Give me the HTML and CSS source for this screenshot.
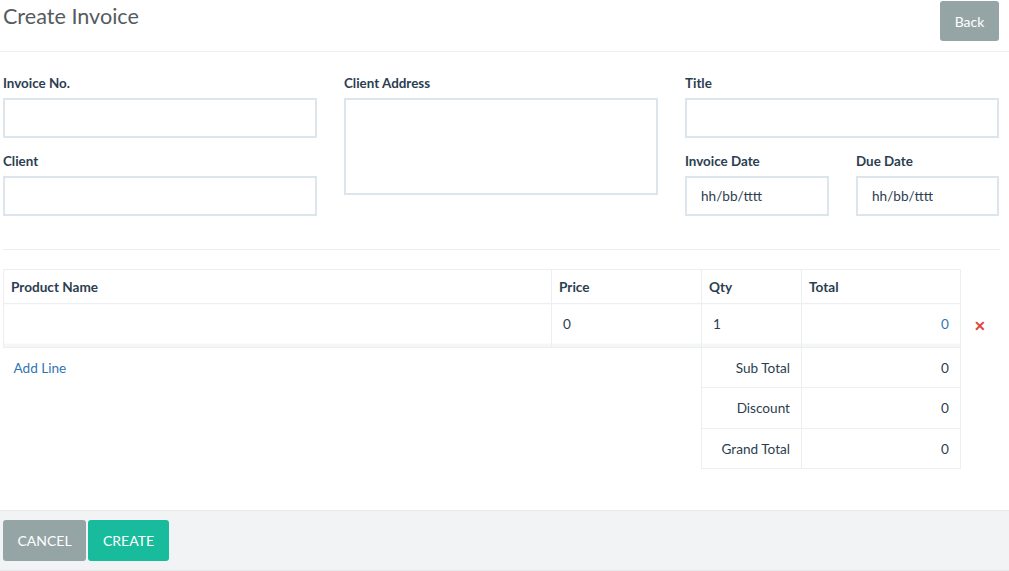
FILE: index.html
```html
<!DOCTYPE html>
<html>
<head>
<meta charset="utf-8">
<link rel="stylesheet" href="styles.css">
</head>
<body>
<div class="page">
  <header class="topbar">
    <h1 class="title">Create Invoice</h1>
    <button class="btn btn-grey btn-back">Back</button>
  </header>

  <section class="form-grid">
    <div class="col">
      <div class="field">
        <label class="lbl">Invoice No.</label>
        <input class="inp" type="text">
      </div>
      <div class="field field-2">
        <label class="lbl">Client</label>
        <input class="inp" type="text">
      </div>
    </div>
    <div class="col">
      <div class="field">
        <label class="lbl">Client Address</label>
        <textarea class="inp area"></textarea>
      </div>
    </div>
    <div class="col">
      <div class="field">
        <label class="lbl">Title</label>
        <input class="inp" type="text">
      </div>
      <div class="dates field-2">
        <div class="field">
          <label class="lbl">Invoice Date</label>
          <input class="inp date" type="text" value="hh/bb/tttt">
        </div>
        <div class="field">
          <label class="lbl">Due Date</label>
          <input class="inp date" type="text" value="hh/bb/tttt">
        </div>
      </div>
    </div>
  </section>

  <hr class="sep">

  <table class="items">
    <colgroup>
      <col class="c-name"><col class="c-price"><col class="c-qty"><col class="c-total"><col class="c-rm">
    </colgroup>
    <thead>
      <tr class="head-row">
        <th>Product Name</th>
        <th>Price</th>
        <th>Qty</th>
        <th>Total</th>
        <th class="noborder"></th>
      </tr>
    </thead>
    <tbody>
      <tr class="item-row">
        <td class="strip"></td>
        <td class="strip num-left">0</td>
        <td class="strip num-left">1</td>
        <td class="strip num-right link">0</td>
        <td class="noborder rm"><span class="x">&#x2715;</span></td>
      </tr>
      <tr class="sum-row">
        <td class="noborder addline" colspan="2" rowspan="3"><a class="link" href="#">Add Line</a></td>
        <td class="sum-lbl">Sub Total</td>
        <td class="num-right">0</td>
        <td class="noborder"></td>
      </tr>
      <tr class="sum-row tall">
        <td class="sum-lbl">Discount</td>
        <td class="num-right">0</td>
        <td class="noborder"></td>
      </tr>
      <tr class="sum-row">
        <td class="sum-lbl">Grand Total</td>
        <td class="num-right">0</td>
        <td class="noborder"></td>
      </tr>
    </tbody>
  </table>

  <footer class="footer">
    <button class="btn btn-grey btn-cancel">CANCEL</button>
    <button class="btn btn-green btn-create">CREATE</button>
  </footer>
</div>
</body>
</html>
```

FILE: styles.css
```css
* { box-sizing: border-box; }
html, body { margin: 0; padding: 0; background: #fff; }
body {
  font-family: Lato, "Open Sans", sans-serif;
  font-size: 13.6px;
  color: #2c3e50;
}
.page { width: 1009px; }

.topbar {
  display: flex;
  justify-content: space-between;
  align-items: flex-start;
  height: 52px;
  border-bottom: 1px solid #eeeeee;
  padding: 1px 10px 0 3px;
}
.title {
  margin: 2px 0 0 0;
  font-size: 21.6px;
  font-weight: 400;
  color: #555b60;
  line-height: 26px;
}
.btn {
  border: none;
  border-radius: 3px;
  color: #fff;
  font-family: Lato, sans-serif;
  font-size: 14px;
  cursor: pointer;
}
.btn-grey { background: #95a5a6; }
.btn-green { background: #18bc9c; }
.btn-back { width: 59px; height: 40px; }

.form-grid {
  display: grid;
  grid-template-columns: 314px 314px 314px;
  column-gap: 27px;
  padding: 23px 10px 0 3px;
}
.field { display: flex; flex-direction: column; }
.field-2 { margin-top: 15px; }
.lbl {
  font-weight: 700;
  font-size: 13.4px;
  line-height: 16px;
  margin-bottom: 7px;
  color: #2c3e50;
}
.inp {
  height: 40px;
  border: 2px solid #dce4ec;
  border-radius: 0;
  background: #fff;
  font-family: Lato, sans-serif;
  font-size: 13.6px;
  color: #2c3e50;
  padding: 0 14px;
  outline: none;
  width: 100%;
}
.area { height: 97px; resize: none; }
.dates {
  display: grid;
  grid-template-columns: 144px 143px;
  column-gap: 27px;
}

.sep {
  margin: 33px 9px 0 3px;
  border: none;
  border-top: 1px solid #eeeeee;
  height: 0;
}

.items {
  margin: 19px 0 0 3px;
  border-collapse: collapse;
  table-layout: fixed;
  width: 1005px;
}
.c-name { width: 548px; }
.c-price { width: 150px; }
.c-qty { width: 100px; }
.c-total { width: 159px; }
.c-rm { width: 48px; }
.items th, .items td {
  border: 1px solid #eceeef;
  padding: 0 11px;
  text-align: left;
  vertical-align: middle;
}
.items th {
  font-weight: 700;
  height: 34px;
  padding: 0 7px;
  color: #2c3e50;
}
.items .noborder { border: none; }
.item-row td { height: 44px; }
.strip {
  background: linear-gradient(to top, #f5f6f7 4px, #ffffff 4px);
  padding-bottom: 4px !important;
}
.num-left { padding-left: 11px; }
.num-right { text-align: right !important; }
.link { color: #2f75b5; text-decoration: none; }
.rm { text-align: left; padding-left: 13px !important; }
.x { color: #e0453a; font-size: 14px; font-weight: 700; }
.sum-row td { height: 40px; }
.sum-row.tall td { height: 41px; }
.sum-lbl { text-align: right !important; padding-right: 11px !important; }
.addline { vertical-align: top !important; padding: 11px 11px 0 10px !important; }
.addline .link { display: inline-block; line-height: 18px; }

.footer {
  margin-top: 41px;
  height: 61px;
  background: #f2f3f5;
  border-top: 1px solid #e8e9eb;
  border-bottom: 1px solid #e8e9eb;
  display: flex;
  align-items: flex-start;
  gap: 2px;
  padding: 9px 0 0 3px;
}
.btn-cancel { width: 83px; height: 41px; }
.btn-create { width: 81px; height: 41px; }
```
